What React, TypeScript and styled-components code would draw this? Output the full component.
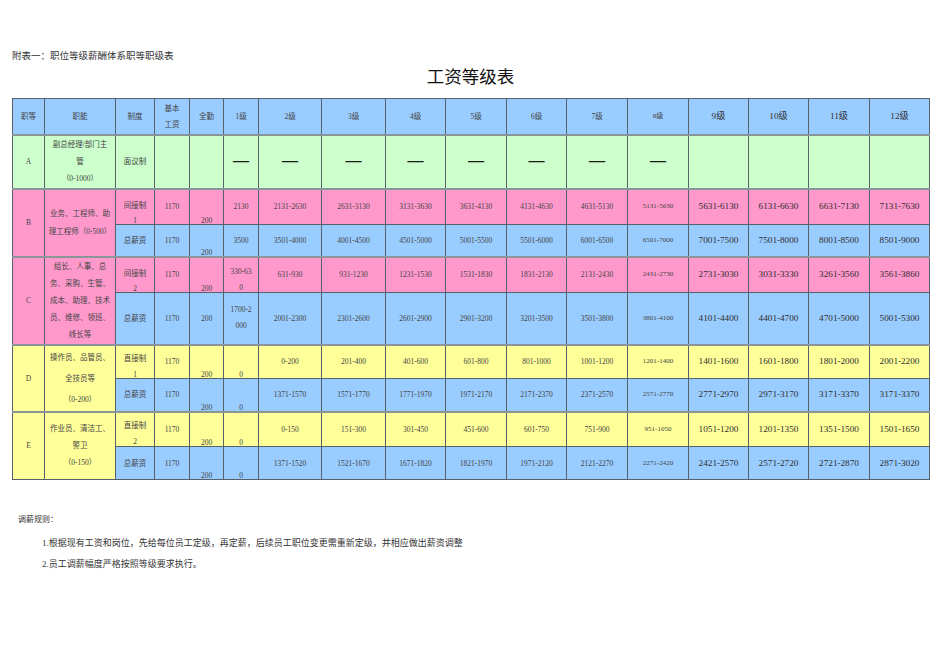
import React from 'react';
import styled, { createGlobalStyle } from 'styled-components';

const GlobalStyle = createGlobalStyle`
  body {
    margin: 0;
    background: #ffffff;
    font-family: "Liberation Serif", "Noto Sans CJK SC", serif;
    color: #333;
  }
`;

type Bg = 'blue' | 'green' | 'pink' | 'yellow';

const colors: Record<Bg, string> = {
  blue: '#99ccff',
  green: '#ccffcc',
  pink: '#ff99cc',
  yellow: '#ffff99',
};

const Page = styled.div`
  width: 950px;
  box-sizing: border-box;
  padding: 50px 0 0 12px;
`;

const Caption = styled.div`
  font-size: 9.5px;
  line-height: 12px;
  color: #333;
`;

const Title = styled.h1`
  width: 917px;
  margin: 3px 0 0;
  text-align: center;
  font-family: "Noto Sans CJK SC", sans-serif;
  font-weight: 400;
  font-size: 17.5px;
  line-height: 22px;
  color: #111;
`;

const Table = styled.table`
  margin-top: 11px;
  width: 917px;
  table-layout: fixed;
  border-collapse: collapse;
`;

const Row = styled.tr<{ $h: number }>`
  height: ${p => p.$h}px;
`;

const Cell = styled.td<{
  $bg: Bg;
  $size: number;
  $valign?: 'middle' | 'bottom' | 'top';
  $lh?: number;
  $groupTop?: boolean;
  $padTop?: number;
}>`
  background: ${p => colors[p.$bg]};
  border: 1px solid #56616a;
  border-top: ${p => (p.$groupTop ? '2px solid #8a9598' : '1px solid #56616a')};
  font-size: ${p => p.$size}px;
  line-height: ${p => p.$lh ?? 15}px;
  vertical-align: ${p => p.$valign ?? 'middle'};
  text-align: center;
  padding: ${p => p.$padTop ?? 0}px 0 0;
  white-space: nowrap;
  overflow: visible;
  color: ${p => (p.$size > 9 ? '#2e2e2e' : '#444')};
`;

const Lines = styled.div<{ $drop?: number }>`
  margin-bottom: ${p => -(p.$drop ?? 0)}px;
`;

const Dash = styled.span`
  font-size: 16px;
  font-weight: 700;
  color: #1a1a1a;
`;

const Notes = styled.div`
  margin-top: 34px;
`;

const NoteHead = styled.div`
  padding-left: 6px;
  font-size: 8px;
  line-height: 12px;
  color: #333;
`;

const NoteList = styled.div`
  margin-top: 10px;
  padding-left: 30px;
  display: flex;
  flex-direction: column;
  gap: 7px;
`;

const NoteItem = styled.div`
  font-size: 9px;
  line-height: 14px;
  color: #333;
`;

const widths = [32, 71, 39, 35, 34, 35, 63, 64, 60, 61, 60, 61, 61, 60, 60, 61, 60];

const sizeFor = (col: number) => (col >= 13 ? 9.2 : col === 12 ? 7 : 7.5);

type CellDef = {
  t: string[];
  v?: 'bottom';
  lh?: number;
  drop?: number;
  span?: number;
  bg?: Bg;
};

type RowDef = {
  h: number;
  bg: Bg;
  groupTop?: boolean;
  start: number; // first column index of this row's cells
  cells: CellDef[];
};

const levels = (...vals: string[]): CellDef[] => vals.map(v => ({ t: [v] }));

const rows: RowDef[] = [
  {
    h: 36,
    bg: 'pink',
    groupTop: true,
    start: 0,
    cells: [
      { t: ['B'], span: 2 },
      { t: ['业务、工程师、助', '理工程师（0-500）'], span: 2, lh: 18 },
      { t: ['间接制', '1'], v: 'bottom', drop: 4 },
      { t: ['1170'] },
      { t: ['200'], v: 'bottom', drop: 4 },
      { t: ['2130'] },
      ...levels('2131-2630', '2631-3130', '3131-3630', '3631-4130', '4131-4630', '4631-5130', '5131-5630', '5631-6130', '6131-6630', '6631-7130', '7131-7630'),
    ],
  },
  {
    h: 32,
    bg: 'blue',
    start: 2,
    cells: [
      { t: ['总薪资'] },
      { t: ['1170'] },
      { t: ['200'], v: 'bottom', drop: 4 },
      { t: ['3500'] },
      ...levels('3501-4000', '4001-4500', '4501-5000', '5001-5500', '5501-6000', '6001-6500', '6501-7000', '7001-7500', '7501-8000', '8001-8500', '8501-9000'),
    ],
  },
  {
    h: 36,
    bg: 'pink',
    groupTop: true,
    start: 0,
    cells: [
      { t: ['C'], span: 2 },
      { t: ['组长、人事、总', '务、采购、生管、', '成本、助理、技术', '员、维修、领班、', '线长等'], span: 2, lh: 17 },
      { t: ['间接制', '2'], v: 'bottom', drop: 4 },
      { t: ['1170'] },
      { t: ['200'], v: 'bottom', drop: 4 },
      { t: ['330-63', '0'], v: 'bottom', lh: 16, drop: 4 },
      ...levels('631-930', '931-1230', '1231-1530', '1531-1830', '1831-2130', '2131-2430', '2431-2730', '2731-3030', '3031-3330', '3261-3560', '3561-3860'),
    ],
  },
  {
    h: 52,
    bg: 'blue',
    start: 2,
    cells: [
      { t: ['总薪资'] },
      { t: ['1170'] },
      { t: ['200'] },
      { t: ['1700-2', '000'], lh: 16 },
      ...levels('2001-2300', '2301-2600', '2601-2900', '2901-3200', '3201-3500', '3501-3800', '3801-4100', '4101-4400', '4401-4700', '4701-5000', '5001-5300'),
    ],
  },
  {
    h: 34,
    bg: 'yellow',
    groupTop: true,
    start: 0,
    cells: [
      { t: ['D'], span: 2 },
      { t: ['操作员、品管员、', '全技员等', '（0-200）'], span: 2, lh: 21 },
      { t: ['直接制', '1'], v: 'bottom', lh: 16, drop: 5 },
      { t: ['1170'] },
      { t: ['200'], v: 'bottom', drop: 4 },
      { t: ['0'], v: 'bottom', drop: 4 },
      ...levels('0-200', '201-400', '401-600', '601-800', '801-1000', '1001-1200', '1201-1400', '1401-1600', '1601-1800', '1801-2000', '2001-2200'),
    ],
  },
  {
    h: 33,
    bg: 'blue',
    start: 2,
    cells: [
      { t: ['总薪资'] },
      { t: ['1170'] },
      { t: ['200'], v: 'bottom', drop: 4 },
      { t: ['0'], v: 'bottom', drop: 4 },
      ...levels('1371-1570', '1571-1770', '1771-1970', '1971-2170', '2171-2370', '2371-2570', '2571-2770', '2771-2970', '2971-3170', '3171-3370', '3171-3370'),
    ],
  },
  {
    h: 35,
    bg: 'yellow',
    groupTop: true,
    start: 0,
    cells: [
      { t: ['E'], span: 2 },
      { t: ['作业员、清洁工、', '警卫', '（0-150）'], span: 2, lh: 17 },
      { t: ['直接制', '2'], v: 'bottom', lh: 16, drop: 4 },
      { t: ['1170'] },
      { t: ['200'], v: 'bottom', drop: 4 },
      { t: ['0'], v: 'bottom', drop: 4 },
      ...levels('0-150', '151-300', '301-450', '451-600', '601-750', '751-900', '951-1050', '1051-1200', '1201-1350', '1351-1500', '1501-1650'),
    ],
  },
  {
    h: 33,
    bg: 'blue',
    start: 2,
    cells: [
      { t: ['总薪资'] },
      { t: ['1170'] },
      { t: ['200'], v: 'bottom', drop: 4 },
      { t: ['0'], v: 'bottom', drop: 4 },
      ...levels('1371-1520', '1521-1670', '1671-1820', '1821-1970', '1971-2120', '2121-2270', '2271-2420', '2421-2570', '2571-2720', '2721-2870', '2871-3020'),
    ],
  },
];

const headers = ['职等', '职能', '制度', '', '全勤', '1级', '2级', '3级', '4级', '5级', '6级', '7级', '8级', '9级', '10级', '11级', '12级'];

const renderLines = (lines: string[]) =>
  lines.map((l, i) => (
    <React.Fragment key={i}>
      {i > 0 && <br />}
      {l}
    </React.Fragment>
  ));

export default function App() {
  return (
    <>
      <GlobalStyle />
      <Page>
        <Caption>附表一：职位等级薪酬体系职等职级表</Caption>
        <Title>工资等级表</Title>

        <Table>
          <colgroup>
            {widths.map((w, i) => (
              <col key={i} style={{ width: w }} />
            ))}
          </colgroup>
          <tbody>
            <Row $h={36}>
              {headers.map((h, i) =>
                i === 3 ? (
                  <Cell key={i} $bg="blue" $size={7.5} $valign="top" $lh={16} $padTop={2}>
                    <Lines $drop={4}>
                      基本
                      <br />
                      工资
                    </Lines>
                  </Cell>
                ) : (
                  <Cell key={i} $bg="blue" $size={sizeFor(i)}>
                    {h}
                  </Cell>
                )
              )}
            </Row>

            <Row $h={54}>
              <Cell $bg="green" $size={7.5} $groupTop>A</Cell>
              <Cell $bg="green" $size={7.5} $lh={17} $groupTop>
                副总经理/部门主
                <br />
                管
                <br />
                （0-1000）
              </Cell>
              <Cell $bg="green" $size={7.5} $groupTop>面议制</Cell>
              <Cell $bg="green" $size={7.5} $groupTop />
              <Cell $bg="green" $size={7.5} $groupTop />
              {Array.from({ length: 8 }).map((_, i) => (
                <Cell key={i} $bg="green" $size={7.5} $groupTop>
                  <Dash>—</Dash>
                </Cell>
              ))}
              {Array.from({ length: 4 }).map((_, i) => (
                <Cell key={'e' + i} $bg="green" $size={9.2} $groupTop />
              ))}
            </Row>

            {rows.map((r, ri) => (
              <Row key={ri} $h={r.h}>
                {r.cells.map((c, ci) => {
                  const col = r.start + ci;
                  return (
                    <Cell
                      key={ci}
                      rowSpan={c.span}
                      $bg={c.bg ?? r.bg}
                      $size={sizeFor(col)}
                      $valign={c.v}
                      $lh={c.lh}
                      $groupTop={r.groupTop}
                    >
                      <Lines $drop={c.drop}>{renderLines(c.t)}</Lines>
                    </Cell>
                  );
                })}
              </Row>
            ))}
          </tbody>
        </Table>

        <Notes>
          <NoteHead>调薪规则：</NoteHead>
          <NoteList>
            <NoteItem>1.根据现有工资和岗位，先给每位员工定级，再定薪，后续员工职位变更需重新定级，并相应做出薪资调整</NoteItem>
            <NoteItem>2.员工调薪幅度严格按照等级要求执行。</NoteItem>
          </NoteList>
        </Notes>
      </Page>
    </>
  );
}
